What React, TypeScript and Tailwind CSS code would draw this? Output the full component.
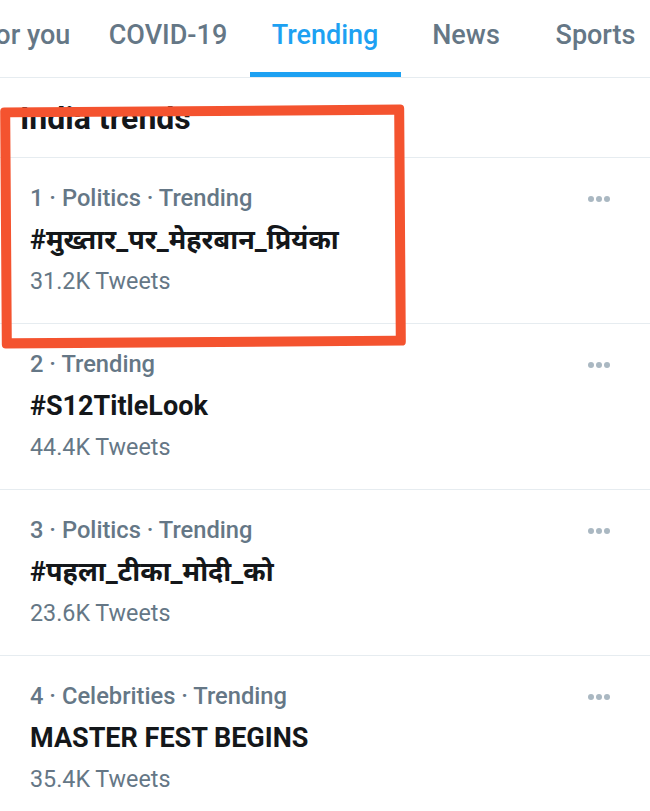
import React from "react";

const trends = [
  { meta: "1 · Politics · Trending", title: "#मुख्तार_पर_मेहरबान_प्रियंका", count: "31.2K Tweets" },
  { meta: "2 · Trending", title: "#S12TitleLook", count: "44.4K Tweets" },
  { meta: "3 · Politics · Trending", title: "#पहला_टीका_मोदी_को", count: "23.6K Tweets" },
  { meta: "4 · Celebrities · Trending", title: "MASTER FEST BEGINS", count: "35.4K Tweets" },
];

function Dots() {
  return (
    <div className="flex gap-[2px] mt-[3px]">
      <span className="w-[6px] h-[6px] rounded-full bg-[#aab8c2]" />
      <span className="w-[6px] h-[6px] rounded-full bg-[#aab8c2]" />
      <span className="w-[6px] h-[6px] rounded-full bg-[#aab8c2]" />
    </div>
  );
}

export default function App() {
  return (
    <div className="relative w-[650px] h-[811px] overflow-hidden bg-white font-['Roboto','Noto_Sans',sans-serif]">
      <div className="flex h-[77px] ml-[-46px] text-[27px] font-medium text-[#657786]">
        <div className="w-[143px] shrink-0 flex items-center justify-center pb-[6px]">For you</div>
        <div className="w-[142px] shrink-0 flex items-center justify-center pb-[6px]">COVID-19</div>
        <div className="w-[172px] shrink-0 flex justify-center">
          <div className="w-[151px] flex items-center justify-center text-[#1da1f2] border-b-[5px] border-[#1da1f2] pb-[1px]">Trending</div>
        </div>
        <div className="w-[110px] shrink-0 flex items-center justify-center pb-[6px]">News</div>
        <div className="w-[149px] shrink-0 flex items-center justify-center pb-[6px]">Sports</div>
      </div>
      <div className="h-px bg-[#e6ecf0]" />
      <div className="h-[79px] flex items-center px-[20px] pb-[0px] text-[32px] font-bold text-[#14171a]">India trends</div>
      {trends.map((t, i) => (
        <div key={i}>
          <div className="h-px bg-[#e6ecf0]" />
          <div className="h-[165px] px-[30px] pt-[26px] flex justify-between">
            <div className="flex flex-col">
              <div className="text-[23.7px] leading-[28px] font-medium text-[#657786]">{t.meta}</div>
              <div className="mt-[14px] text-[27px] leading-[28px] font-bold text-[#14171a]">{t.title}</div>
              <div className="mt-[13px] text-[23.3px] leading-[28px] text-[#657786]">{t.count}</div>
            </div>
            <div className="pr-[10px] pt-[9px]">
              <Dots />
            </div>
          </div>
        </div>
      ))}
      <div className="absolute left-[1px] top-[106px] w-[404px] h-[241px] border-[10px] border-[#f4532f] rounded-[4px] rotate-[-0.4deg]" />
    </div>
  );
}
